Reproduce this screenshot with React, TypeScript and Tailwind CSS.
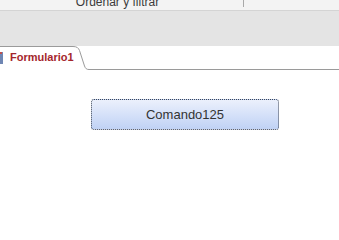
import React from "react";

export default function App() {
  return (
    <div className="w-[339px] h-[240px] bg-white overflow-hidden flex flex-col" style={{ fontFamily: '"Liberation Sans", Arial, sans-serif' }}>
      {/* ribbon bottom strip */}
      <div className="h-[11px] shrink-0 bg-[#f3f3f3] border-b border-[#d4d4d4] flex items-start overflow-hidden">
        <div className="w-[244px] h-[7px] flex justify-center items-start border-r border-[#a8a8a8]">
          <span className="text-[12px] leading-[14px] text-[#3b3b3b] -mt-[5px] -ml-[8px] whitespace-nowrap">Ordenar y filtrar</span>
        </div>
      </div>
      {/* gray band */}
      <div className="h-[35px] shrink-0 bg-[#e4e4e4]" />
      {/* tab row */}
      <div className="h-[24px] shrink-0 relative flex items-center">
        <svg className="absolute inset-0" width="339" height="24" viewBox="0 0 339 24">
          <path d="M0 0.5 H73 C77 0.5 78.5 2 79.5 4.5 L84.5 20 C85.5 22.5 86.5 23.5 89 23.5 H339" fill="none" stroke="#9a9a9a" strokeWidth="1" />
        </svg>
        <div className="relative flex items-center gap-[7px]">
          <div className="w-[3px] h-[12px] bg-[#6f86b3]">
            <div className="w-[2px] h-[2px] bg-[#c0504d]" />
          </div>
          <span className="text-[11px] leading-[13px] font-bold text-[#a4262c] -mt-[1px]">Formulario1</span>
        </div>
      </div>
      {/* button */}
      <div className="pl-[91px] pt-[29px]">
        <div className="w-[188px] h-[31px] rounded-[3px] border border-dotted border-[#3f4756] bg-gradient-to-b from-[#ebf0fc] to-[#c0d2f5] flex items-center justify-center text-[13px] text-[#333333]">
          Comando125
        </div>
      </div>
    </div>
  );
}
